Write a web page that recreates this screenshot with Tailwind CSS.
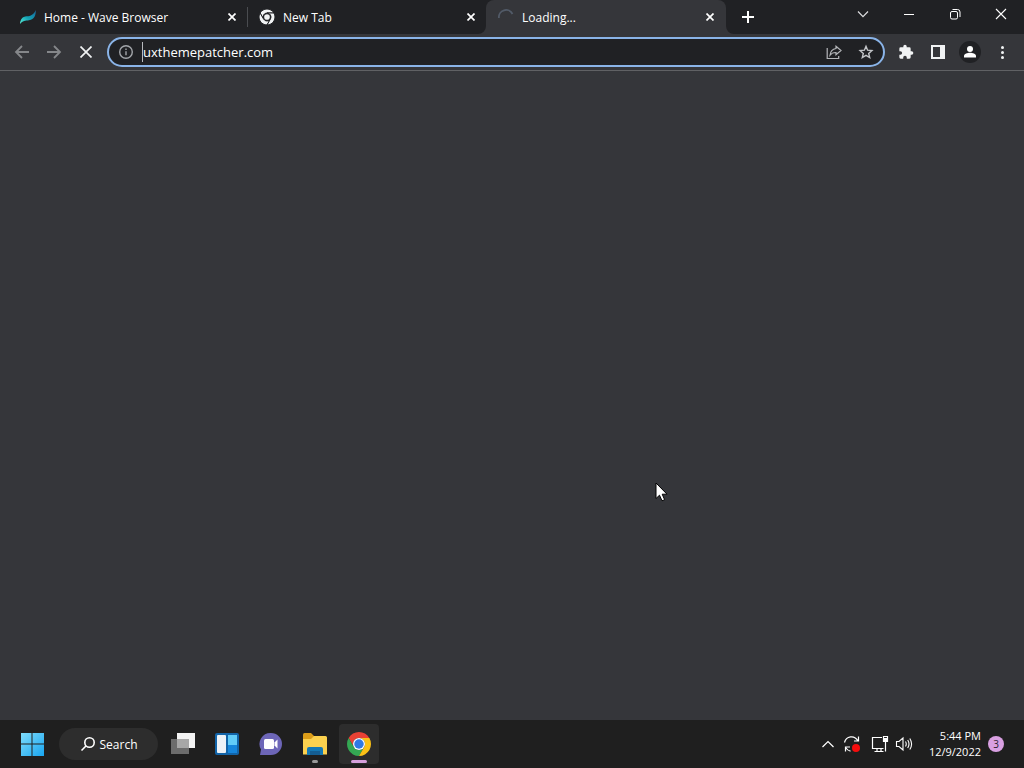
<!DOCTYPE html>
<html lang="en">
<head>
<meta charset="utf-8">
<meta name="viewport" content="width=device-width, initial-scale=1">
<title>Loading...</title>
<script src="https://cdn.jsdelivr.net/npm/@tailwindcss/browser@4"></script>
</head>
<body class="flex h-screen flex-col overflow-hidden bg-[#35363a] font-['Open_Sans','Noto_Sans',sans-serif] text-xs text-white">

<header class="shrink-0">
  <div class="flex h-[34px] bg-[#202124] pl-2">
    <div class="flex min-w-0 flex-1" role="tablist">
      <div class="flex w-[239px] items-center pl-3 pr-[7px]">
        <svg class="size-4 shrink-0" viewBox="0 0 16 16"><defs><linearGradient id="wave" x1="0" y1="1" x2="1" y2="0"><stop offset="0" stop-color="#5cf0d8"/><stop offset=".45" stop-color="#14a3b4"/><stop offset="1" stop-color="#17649a"/></linearGradient></defs><path d="M0 15C.3 10.500 2.500 7.500 6.500 7.300c4.500-.2 7-1.500 9.300-6.300C16 6 14.500 10.500 9 11.200 5.500 11.600 2.500 11.500 0 15Z" fill="url(#wave)"/></svg>
        <button role="tab" class="ml-2 flex-1 truncate pt-px text-left">Home - Wave Browser</button>
        <button class="flex size-4 items-center justify-center" aria-label="Close Home - Wave Browser"><svg class="size-2" viewBox="0 0 8 8" stroke="currentColor" stroke-width="1.700"><path d="M.5.5l7 7M7.500.5l-7 7"/></svg></button>
      </div>
      <div class="flex w-[239px] items-center">
        <span class="h-5 w-px bg-[#4a4c50]"></span>
        <div class="flex flex-1 items-center pl-[11px] pr-[7px]">
          <svg class="size-4 shrink-0" viewBox="0 0 48 48"><g fill="#f1f3f4" stroke="#202124" stroke-width="3"><path d="M24 12H44.780A24 24 0 0 0 3.220 12L13.610 30A12 12 0 0 1 24 12Z"/><path d="M13.610 30L3.220 12A24 24 0 0 0 24 48L34.390 30A12 12 0 0 1 13.610 30Z"/><path d="M34.390 30L24 48A24 24 0 0 0 44.780 12H24A12 12 0 0 1 34.390 30Z"/></g><circle cx="24" cy="24" r="8.500" fill="#f1f3f4"/></svg>
          <button role="tab" class="ml-2 flex-1 truncate pt-px text-left">New Tab</button>
          <button class="flex size-4 items-center justify-center" aria-label="Close New Tab"><svg class="size-2" viewBox="0 0 8 8" stroke="currentColor" stroke-width="1.700"><path d="M.5.5l7 7M7.500.5l-7 7"/></svg></button>
        </div>
      </div>
      <div class="relative flex w-[240px] items-center rounded-t-lg bg-[#35363a] pl-3 pr-2">
        <svg class="absolute bottom-0 right-full size-2" viewBox="0 0 8 8"><path d="M8 0v8H0a8 8 0 0 0 8-8Z" fill="#35363a"/></svg>
        <svg class="absolute bottom-0 left-full size-2" viewBox="0 0 8 8"><path d="M0 0v8h8a8 8 0 0 1-8-8Z" fill="#35363a"/></svg>
        <svg class="size-4 shrink-0" viewBox="0 0 16 16" fill="none"><path d="M.9 9A7.200 7.200 0 0 1 14.500 5" stroke="#525b68" stroke-width="1.800"/></svg>
        <button role="tab" aria-selected="true" class="ml-2 flex-1 truncate pt-px text-left">Loading...</button>
        <button class="flex size-4 items-center justify-center" aria-label="Close Loading"><svg class="size-2" viewBox="0 0 8 8" stroke="currentColor" stroke-width="1.700"><path d="M.5.5l7 7M7.500.5l-7 7"/></svg></button>
      </div>
      <button class="ml-2 flex w-7 items-center justify-center" aria-label="New tab"><svg class="size-3" viewBox="0 0 12 12" stroke="#fff" stroke-width="2"><path d="M6 0v12M0 6h12"/></svg></button>
    </div>
    <div class="flex h-7">
      <button class="flex w-[46px] items-center justify-center" aria-label="Search tabs"><svg class="h-3 w-3" viewBox="0 0 12 12" fill="none" stroke="#dcdddf" stroke-width="1.200"><path d="M1 3.500L6 8.700l5-5.200"/></svg></button>
      <button class="flex w-[46px] items-center justify-center" aria-label="Minimize"><svg class="size-3" viewBox="0 0 12 12" stroke="#fff"><path d="M1 6.500h10"/></svg></button>
      <button class="flex w-[46px] items-center justify-center" aria-label="Restore"><svg class="size-3" viewBox="0 0 12 12" fill="none" stroke="#fff"><rect x="1.500" y="3.500" width="7" height="7.500" rx="1.500"/><path d="M3.500 1.500h5a2.500 2.500 0 0 1 2.500 2.500v5"/></svg></button>
      <button class="flex w-[46px] items-center justify-center" aria-label="Close window"><svg class="size-3" viewBox="0 0 12 12" stroke="#fff" stroke-width="1.100"><path d="M1 1l10 10M11 1L1 11"/></svg></button>
    </div>
  </div>

  <div class="flex h-[37px] items-center border-b border-[#606164] px-1.5">
    <button class="flex size-8 items-center justify-center" aria-label="Back"><svg class="size-4" viewBox="0 0 16 16" fill="none" stroke="#85878a" stroke-width="1.800"><path d="M15 8H2M8 2L2 8l6 6"/></svg></button>
    <button class="flex size-8 items-center justify-center" aria-label="Forward"><svg class="size-4" viewBox="0 0 16 16" fill="none" stroke="#85878a" stroke-width="1.800"><path d="M1 8h13M8 2l6 6-6 6"/></svg></button>
    <button class="flex size-8 items-center justify-center" aria-label="Stop loading"><svg class="size-3" viewBox="0 0 12 12" stroke="#f1f3f4" stroke-width="1.700"><path d="M.5.5l11 11M11.500.5l-11 11"/></svg></button>
    <div class="mx-[5px] flex h-[30px] flex-1 items-center rounded-full border-2 border-[#8ab4e8] bg-[#202124] px-[9px]">
      <button class="size-4" aria-label="Site information"><svg class="size-4" viewBox="0 0 16 16" fill="none" stroke="#a3a6aa" stroke-width="1.400"><circle cx="8" cy="8" r="6.300"/><path d="M8 7.200v4M8 4.500v1.500"/></svg></button>
      <span class="ml-2 h-5 w-px bg-[#b8babd]"></span>
      <input class="min-w-0 flex-1 bg-transparent pt-0.5 text-[13px] text-white outline-none" aria-label="Address and search bar" value="uxthemepatcher.com">
      <button class="mr-4 size-4" aria-label="Share"><svg class="size-4" viewBox="0 0 16 16" fill="none" stroke="#b4b6b9" stroke-width="1.200"><path d="M1.200 4v10.500h11.500V12"/><path d="M10 2.200L15 6.500 10 10.800V8.500C7.500 8.400 5.500 9.200 4 11.200 4.400 7.500 6.500 5 10 4.500Z"/></svg></button>
      <button class="size-4" aria-label="Bookmark this tab"><svg class="size-4" viewBox="0 0 16 16" fill="none" stroke="#c3c5c8" stroke-width="1.400"><path d="M8 2.300l1.600 3.900 4.300.4-3.200 2.800 1 4.200L8 11.400l-3.700 2.200 1-4.200-3.200-2.800 4.300-.4Z"/></svg></button>
    </div>
    <button class="flex size-8 items-center justify-center" aria-label="Extensions"><svg class="size-4" viewBox="0 0 24 24" fill="#f1f3f4"><path d="M20.500 11H19V7a2 2 0 0 0-2-2h-4V3.500a2.500 2.500 0 0 0-5 0V5H4a2 2 0 0 0-2 2v3.800h1.500a2.700 2.700 0 0 1 0 5.400H2V20a2 2 0 0 0 2 2h3.800v-1.500a2.700 2.700 0 0 1 5.400 0V22H17a2 2 0 0 0 2-2v-4h1.500a2.500 2.500 0 0 0 0-5Z"/></svg></button>
    <button class="flex size-8 items-center justify-center" aria-label="Side panel"><svg class="size-3.5" viewBox="0 0 14 14"><path fill="#f1f3f4" fill-rule="evenodd" d="M0 0h14v14H0ZM2 2v10h7V2Z"/></svg></button>
    <button class="flex size-8 items-center justify-center" aria-label="Profile"><svg class="size-[22px]" viewBox="0 0 22 22"><circle cx="11" cy="11" r="11" fill="#202124"/><g fill="#fff"><circle cx="11" cy="8" r="3"/><path d="M5 16.500V15c0-2.200 3.500-3.300 6-3.300s6 1.100 6 3.300v1.500Z"/></g></svg></button>
    <button class="flex size-8 items-center justify-center" aria-label="Menu"><svg class="size-4" viewBox="0 0 16 16" fill="#f1f3f4"><circle cx="8.500" cy="3.500" r="1.500"/><circle cx="8.500" cy="8.500" r="1.500"/><circle cx="8.500" cy="13.500" r="1.500"/></svg></button>
  </div>
</header>

<main class="min-h-0 flex-1"></main>

<footer class="flex h-12 shrink-0 items-center bg-[#1f1f1f] pl-3 pr-5">
  <button class="flex size-10 items-center justify-center" aria-label="Start"><svg class="size-6" viewBox="0 0 24 24"><defs><linearGradient id="win" x1="0" y1="0" x2="1" y2="1"><stop offset="0" stop-color="#7fdcfb"/><stop offset="1" stop-color="#18a5f0"/></linearGradient></defs><path fill="url(#win)" d="M1 1h10.500v10.500H1ZM12.500 1H24v10.500H12.500ZM1 12.500h10.500V24H1ZM12.500 12.500H24V24H12.500Z"/></svg></button>
  <button class="ml-[7px] flex h-8 w-[99px] items-center justify-center gap-1 rounded-full bg-[#2d2d2d]"><svg class="size-4" viewBox="0 0 16 16" fill="none" stroke="#fff" stroke-width="1.600"><circle cx="9.500" cy="6.500" r="4.700"/><path d="M6.200 9.800L1.500 14.500"/></svg><span class="pt-0.5">Search</span></button>
  <nav class="ml-[5px] flex gap-1" aria-label="Taskbar">
    <button class="flex size-10 items-center justify-center" aria-label="Task view"><svg class="size-6" viewBox="0 0 24 24"><path fill="#f3f3f3" d="M6 1h18v15H6Z"/><path fill="#6c6c6c" d="M0 7h18v15H0Z"/><path fill="#a7a7a7" d="M6 7h12v9H6Z"/></svg></button>
    <button class="flex size-10 items-center justify-center" aria-label="Widgets"><svg class="size-6" viewBox="0 0 24 24"><rect y="1" width="24" height="22" rx="2" fill="#1264a8"/><rect x="2" y="3" width="9" height="18" rx="1" fill="#edf2f7"/><path fill="#62ccf8" d="M13 3h9v10h-9Z"/><path fill="#1686dc" d="M13 13h9v8h-9Z"/></svg></button>
    <button class="flex size-10 items-center justify-center" aria-label="Chat"><svg class="size-6" viewBox="0 0 24 24"><path fill="#6d66b8" d="M12 1a11 11 0 1 1 0 22H1l1-5.500A11 11 0 0 1 12 1Z"/><rect x="5" y="7" width="10" height="10" rx="1.500" fill="#fff"/><path fill="#fff" d="M15.500 10.500L18.500 7.500v9L15.500 13.500Z"/></svg></button>
    <button class="relative flex size-10 items-center justify-center" aria-label="File Explorer"><svg class="size-6" viewBox="0 0 24 24"><path fill="#dc9d19" d="M0 2.500Q0 1 1.500 1H8l3 3v4H0Z"/><path fill="#fbd14e" d="M0 7h8l3-3h11.500Q24 4 24 5.500V22.500H0Z"/><path fill="#1478b4" d="M4 23v-6q0-2 2-2h12q2 0 2 2v6Z"/><path fill="#145d91" d="M7 19h10v4H7Z"/></svg><span class="absolute bottom-px h-[3px] w-1.5 rounded-full bg-[#999]"></span></button>
    <button class="relative flex size-10 items-center justify-center rounded bg-[#2d2d2d]" aria-label="Google Chrome"><svg class="size-6" viewBox="0 0 48 48"><path fill="#e94235" d="M24 12H44.780A24 24 0 0 0 3.220 12L13.610 30A12 12 0 0 1 24 12Z"/><path fill="#34a853" d="M13.610 30L3.220 12A24 24 0 0 0 24 48L34.390 30A12 12 0 0 1 13.610 30Z"/><path fill="#fbc116" d="M34.390 30L24 48A24 24 0 0 0 44.780 12H24A12 12 0 0 1 34.390 30Z"/><circle cx="24" cy="24" r="12" fill="#fff"/><circle cx="24" cy="24" r="9.500" fill="#2f79e5"/></svg><span class="absolute bottom-px h-[3px] w-4 rounded-full bg-[#d6a0dc]"></span></button>
  </nav>
  <div class="ml-auto flex items-center">
    <button class="flex w-6 justify-center" aria-label="Show hidden icons"><svg class="size-3" viewBox="0 0 12 12" fill="none" stroke="#fff" stroke-width="1.200"><path d="M.5 9L6 3.500 11.500 9"/></svg></button>
    <button class="flex w-6 justify-center" aria-label="Windows Update"><svg class="size-[18px]" viewBox="0 0 18 18" fill="none" stroke="#fff" stroke-width="1.200"><path d="M1.500 7.500C3 1 11.500-.5 15 6M15.500 1.500V6H11M7 12H2.500v4.500M2.500 12.500q2 3 5 3.700"/><circle cx="13" cy="13" r="4" fill="#f60d0d" stroke="none"/></svg></button>
    <button class="ml-1 flex w-6 justify-center" aria-label="Network"><svg class="size-[18px]" viewBox="0 0 18 18" fill="none" stroke="#fff" stroke-width="1.200"><path d="M11 2.500H1.500v11h11M6 13.500v3M10 13.500v3M3.500 16.500h9M12.500 1.500h4v5h-4ZM14.500 7v9.500"/><path d="M13 3h3v3h-3Z" fill="#fff" stroke="none"/></svg></button>
    <button class="flex w-6 justify-center" aria-label="Volume"><svg class="size-[18px]" viewBox="0 0 18 18" fill="none" stroke="#fff" stroke-width="1.100"><path d="M1.500 6.500h2.500L8 3v12l-4-3.500H1.500ZM10.500 6.500q1.500 2.500 0 5M12.700 5q2.600 4 0 8M14.800 3.500q3.600 5.500 0 11"/></svg></button>
    <div class="ml-2 w-[57px] text-right text-[11px] leading-4 whitespace-nowrap"><div>5:44 PM</div><div>12/9/2022</div></div>
    <button class="ml-[7px] size-4 rounded-full bg-[#d9a0e2] text-center text-[10px] leading-4 text-[#2b2230]" aria-label="3 notifications">3</button>
  </div>
</footer>

<svg class="pointer-events-none absolute left-[655px] top-[482px] h-[20px] w-[13px]" viewBox="0 0 13 20"><path d="M1 1v15.500l3.500-3.300L7 18.800l2.600-1.100-2.400-5.500H12Z" fill="#fff" stroke="#000"/></svg>
</body>
</html>
